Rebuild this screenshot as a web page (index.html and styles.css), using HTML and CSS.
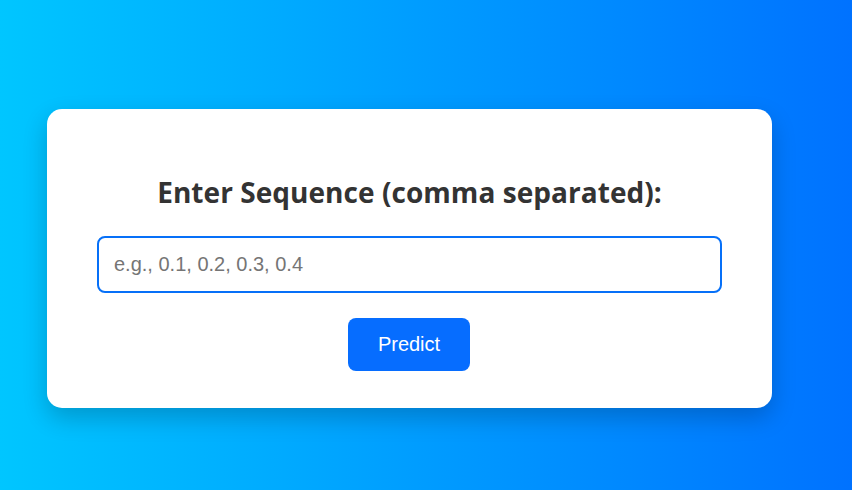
FILE: index.html
```html
<!DOCTYPE html>
<html lang="en">
<head>
<meta charset="utf-8">
<title>Sequence Predictor</title>
<link rel="stylesheet" href="styles.css">
</head>
<body>
<main class="page">
  <section class="card">
    <h2 class="title">Enter Sequence (comma separated):</h2>
    <input class="seq-input" type="text" placeholder="e.g., 0.1, 0.2, 0.3, 0.4">
    <button class="predict-btn" type="button">Predict</button>
  </section>
</main>
</body>
</html>
```
FILE: styles.css
```css
html, body {
  margin: 0;
  height: 100%;
}
body {
  background: linear-gradient(to right, #00c6ff, #0072ff);
  font-family: "Liberation Sans", Arial, sans-serif;
}
.page {
  padding: 109px 0 0 47px;
}
.card {
  box-sizing: border-box;
  width: 725px;
  height: 299px;
  background: #fff;
  border-radius: 15px;
  box-shadow: 0 10px 25px rgba(0, 0, 0, 0.2);
  padding: 64px 50px 0;
  display: flex;
  flex-direction: column;
  align-items: center;
}
.title {
  margin: 0 0 25px;
  font-family: "Open Sans", "Noto Sans", sans-serif;
  font-size: 28px;
  font-weight: 700;
  line-height: 38px;
  letter-spacing: 0.05px;
  color: #333;
}
.seq-input {
  box-sizing: border-box;
  width: 100%;
  height: 57px;
  padding: 0 15px;
  border: 2px solid #0670f8;
  border-radius: 8px;
  font-family: "Liberation Sans", Arial, sans-serif;
  font-size: 20px;
  color: #333;
  outline: none;
}
.seq-input::placeholder {
  color: #757575;
}
.predict-btn {
  margin: 25px 1px 0 0;
  width: 122px;
  height: 53px;
  border: none;
  border-radius: 8px;
  background: #066dff;
  color: #fff;
  font-family: "Liberation Sans", Arial, sans-serif;
  font-size: 20px;
  cursor: pointer;
}
```
